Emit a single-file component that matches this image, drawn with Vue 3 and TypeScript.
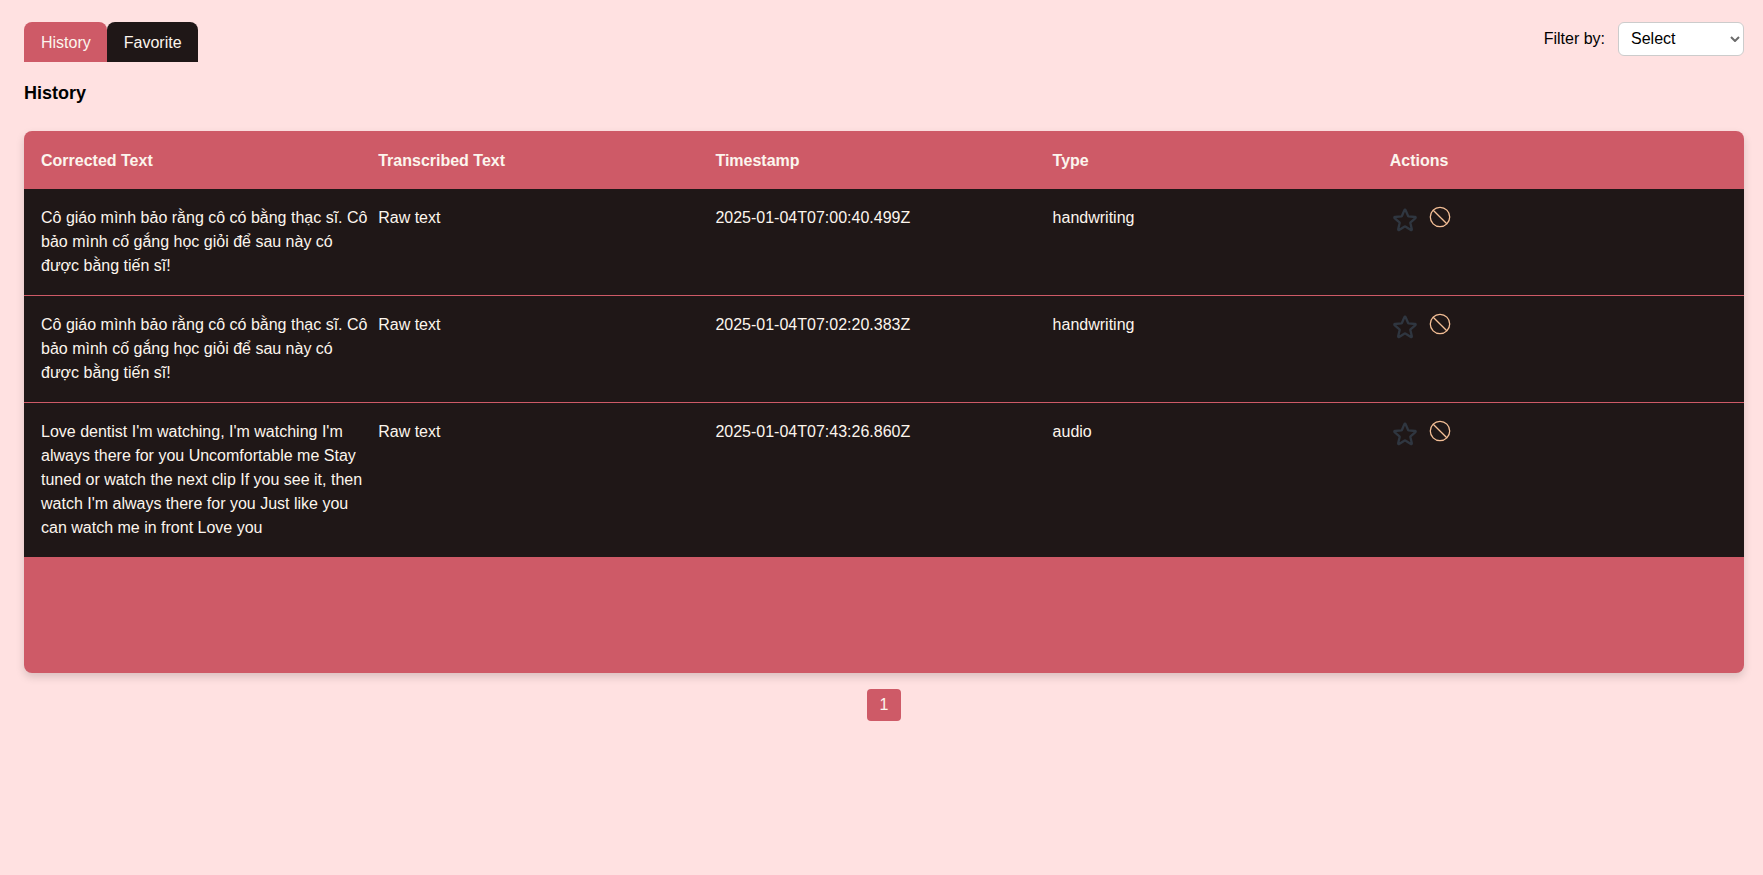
<script setup lang="ts">
import { ref } from 'vue'

interface Entry {
  corrected: string
  raw: string
  timestamp: string
  type: string
}

const columns = ['Corrected Text', 'Transcribed Text', 'Timestamp', 'Type', 'Actions']
const tabs = ['History', 'Favorite']
const activeTab = ref('History')
const filter = ref('')
const lesson =
  'Cô giáo mình bảo rằng cô có bằng thạc sĩ. Cô bảo mình cố gắng học giỏi để sau này có được bằng tiến sĩ!'

const entries: Entry[] = [
  { corrected: lesson, raw: 'Raw text', timestamp: '2025-01-04T07:00:40.499Z', type: 'handwriting' },
  { corrected: lesson, raw: 'Raw text', timestamp: '2025-01-04T07:02:20.383Z', type: 'handwriting' },
  {
    corrected:
      "Love dentist I'm watching, I'm watching I'm always there for you Uncomfortable me Stay tuned or watch the next clip If you see it, then watch I'm always there for you Just like you can watch me in front Love you",
    raw: 'Raw text',
    timestamp: '2025-01-04T07:43:26.860Z',
    type: 'audio',
  },
]
</script>

<template>
  <main class="page">
    <header class="topbar">
      <nav class="tabs">
        <button
          v-for="tab in tabs"
          :key="tab"
          type="button"
          class="tab"
          :class="{ active: tab === activeTab }"
          @click="activeTab = tab"
        >
          {{ tab }}
        </button>
      </nav>
      <div class="filter">
        <label for="filter">Filter by:</label>
        <div class="select-box">
          <select id="filter" v-model="filter">
            <option value="">Select</option>
            <option value="handwriting">Handwriting</option>
            <option value="audio">Audio</option>
          </select>
          <svg class="chevron" viewBox="0 0 10 6" width="10" height="6" aria-hidden="true">
            <path d="M1 1 5 5 9 1" />
          </svg>
        </div>
      </div>
    </header>

    <h1 class="title">History</h1>

    <div class="card">
      <table>
        <thead>
          <tr>
            <th v-for="column in columns" :key="column" scope="col">{{ column }}</th>
          </tr>
        </thead>
        <tbody>
          <tr v-for="entry in entries" :key="entry.timestamp">
            <td>{{ entry.corrected }}</td>
            <td>{{ entry.raw }}</td>
            <td>{{ entry.timestamp }}</td>
            <td>{{ entry.type }}</td>
            <td class="actions">
              <button type="button" class="icon star" aria-label="Add to favorites">
                <svg viewBox="0 0 24 24" width="28" height="28">
                  <path
                    d="M11.48 3.499a.562.562 0 0 1 1.04 0l2.125 5.111a.563.563 0 0 0 .475.345l5.518.442c.499.04.701.663.321.988l-4.204 3.602a.563.563 0 0 0-.182.557l1.285 5.385a.562.562 0 0 1-.84.61l-4.725-2.885a.562.562 0 0 0-.586 0L6.982 20.54a.562.562 0 0 1-.84-.61l1.285-5.386a.562.562 0 0 0-.182-.557l-4.204-3.602a.562.562 0 0 1 .321-.988l5.518-.442a.563.563 0 0 0 .475-.345L11.48 3.5Z"
                  />
                </svg>
              </button>
              <button type="button" class="icon ban" aria-label="Remove">
                <svg viewBox="0 0 22 22" width="22" height="22">
                  <circle cx="11" cy="11" r="9.7" />
                  <path d="M4.2 4.2 17.8 17.8" />
                </svg>
              </button>
            </td>
          </tr>
        </tbody>
      </table>
    </div>

    <nav class="pagination" aria-label="Pages">
      <button type="button" class="page-number" aria-current="page">1</button>
    </nav>
  </main>
</template>

<style>
body {
  margin: 0;
  background: #ffe1e1;
}
</style>

<style scoped>
.page {
  min-height: 100vh;
  box-sizing: border-box;
  padding: 22px 19px 22px 24px;
  background: #ffe1e1;
  color: #000;
  font-family: "Liberation Sans", Arial, sans-serif;
  font-size: 16px;
  line-height: 24px;
}

button {
  border: 0;
  font: inherit;
  cursor: pointer;
}

.topbar {
  display: flex;
  justify-content: space-between;
  align-items: flex-start;
}

.tabs {
  display: flex;
}

.tab {
  padding: 9px 16px 7px 17px;
  border-radius: 8px 8px 0 0;
  background: #1f1717;
  color: #fcf5ed;
}

.tab.active {
  background: #ce5a67;
}

.filter {
  display: flex;
  align-items: center;
  gap: 13px;
}

.select-box {
  position: relative;
}

.filter select {
  display: block;
  appearance: none;
  box-sizing: border-box;
  width: 126px;
  height: 34px;
  padding: 0 24px 0 12px;
  border: 1px solid #ccc;
  border-radius: 6px;
  background: #fff;
  color: #000;
  font: inherit;
}

.chevron {
  position: absolute;
  top: 14px;
  right: 4px;
  fill: none;
  stroke: #6b6b6b;
  stroke-width: 2;
  pointer-events: none;
}

.title {
  margin: 19px 0 25px;
  font-size: 18px;
  line-height: 25px;
  font-weight: 700;
}

.card {
  min-height: calc(100vh - 333px);
  border-radius: 8px;
  overflow: hidden;
  background: #ce5a67;
  box-shadow: 0 4px 8px rgba(0, 0, 0, 0.15);
}

table,
thead,
tbody {
  display: block;
}

tr {
  display: grid;
  grid-template-columns: repeat(5, minmax(0, 1fr));
  padding: 17px;
  color: #fcf5ed;
}

thead tr {
  padding-top: 18px;
  padding-bottom: 16px;
}

th,
td {
  padding: 0 6px 0 0;
  text-align: left;
}

tbody tr {
  border-bottom: 1px solid #ce5a67;
  background: #1f1717;
}

.actions {
  display: flex;
  align-items: flex-start;
  gap: 10px;
  padding-left: 1px;
}

.icon {
  display: flex;
  padding: 0;
  background: none;
}

.icon svg {
  fill: none;
}

.star svg {
  stroke: #2f3640;
  stroke-width: 2;
}

.ban svg {
  stroke: #f4bf96;
  stroke-width: 1.3;
}

.pagination {
  display: flex;
  justify-content: center;
  margin-top: 16px;
}

.page-number {
  padding: 4px 13px;
  border-radius: 4px;
  background: #ce5a67;
  color: #fcf5ed;
}
</style>
